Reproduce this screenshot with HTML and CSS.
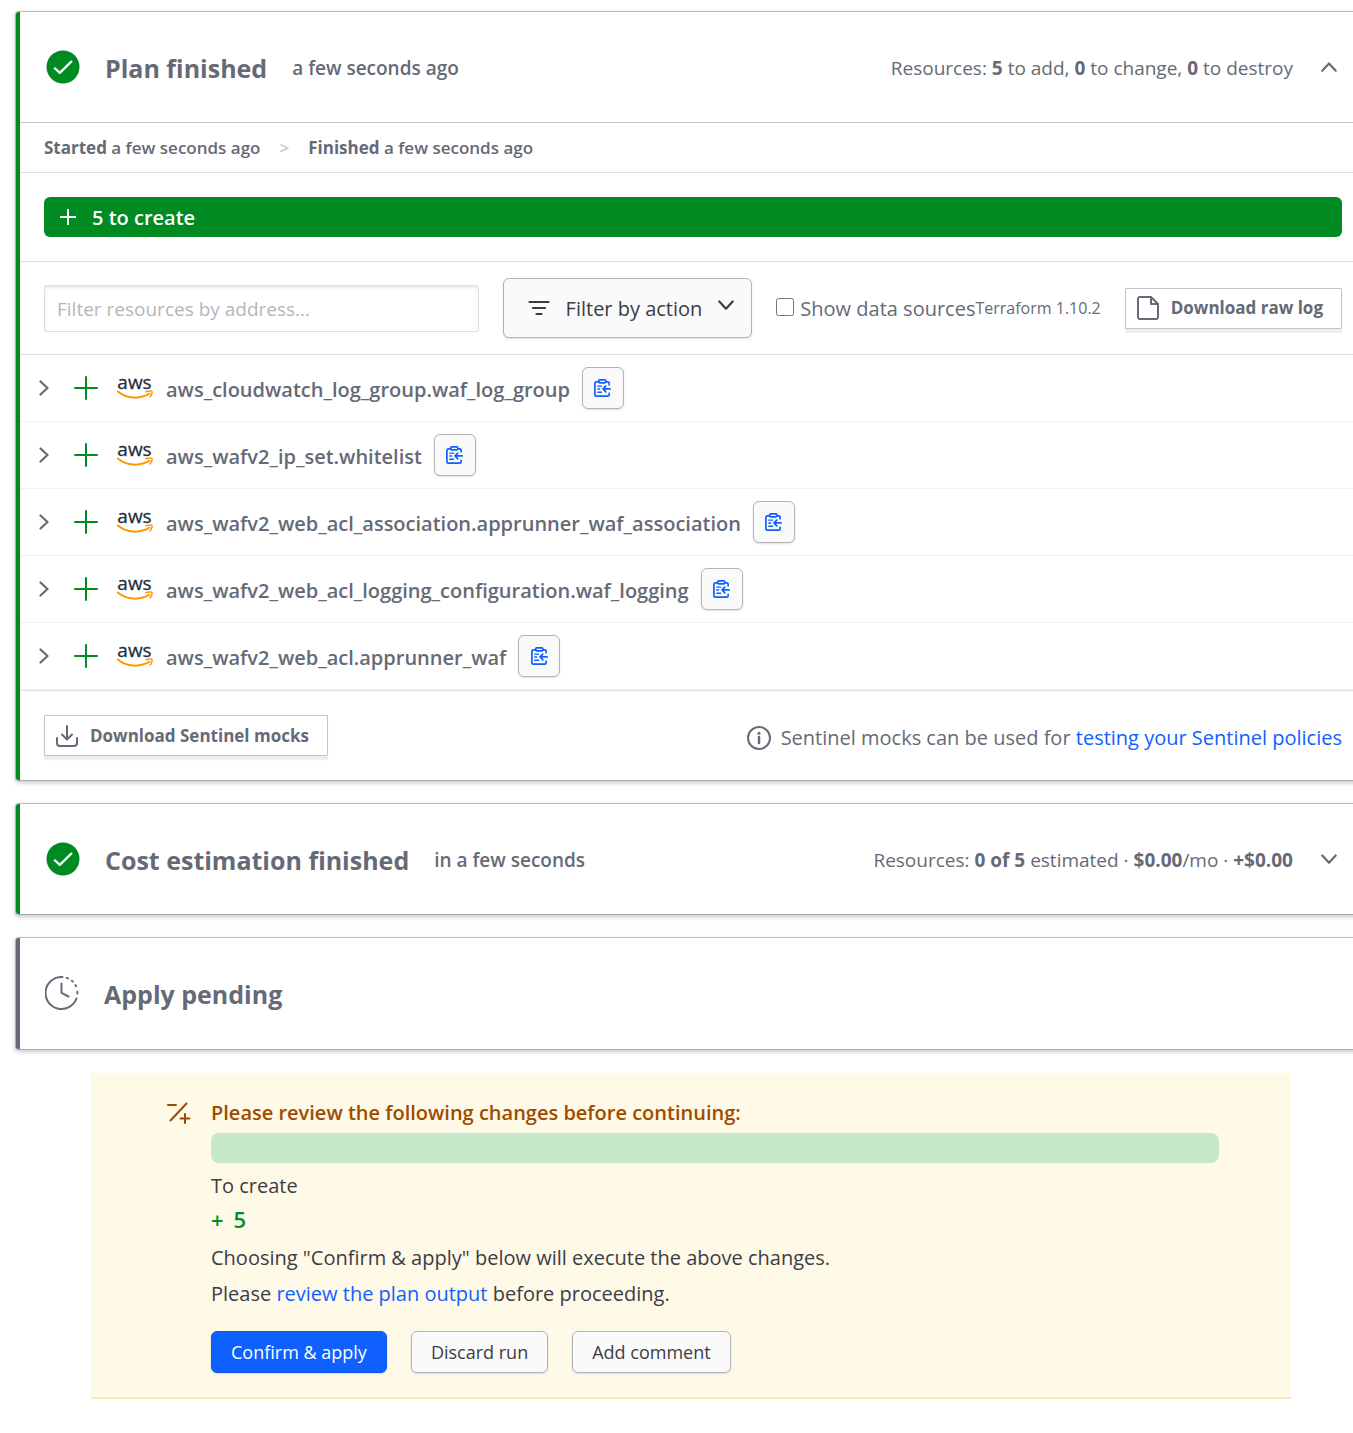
FILE: index.html
```html
<!DOCTYPE html>
<html lang="en">

<head>
  <meta charset="utf-8">
  <meta name="viewport" content="width=device-width, initial-scale=1.0">
  <title>Run details</title>
  <link rel="stylesheet" href="styles.css">
</head>

<body>
  <!-- shared icons -->
  <svg class="sprite" aria-hidden="true">
    <symbol id="icon-check" viewBox="0 0 34 34">
      <circle cx="17" cy="17" r="16.5" fill="#008a22" />
      <path d="M8.800 18.300l5 4.600L25.300 11.600" fill="none" stroke="#fff" stroke-width="2.200" stroke-linecap="round" stroke-linejoin="round" />
    </symbol>
    <symbol id="icon-chevron-right" viewBox="0 0 16 16">
      <path d="M4.500 1.500l7 6.500-7 6.500" fill="none" stroke="currentColor" stroke-width="2.200" stroke-linecap="round" stroke-linejoin="round" />
    </symbol>
    <symbol id="icon-chevron-down" viewBox="0 0 16 16">
      <path d="M1.300 4.500L8 11.700l6.700-7.200" fill="none" stroke="currentColor" stroke-width="2.200" stroke-linecap="round" stroke-linejoin="round" />
    </symbol>
    <symbol id="icon-chevron-up" viewBox="0 0 16 16">
      <path d="M1.300 11.700L8 4.500l6.700 7.200" fill="none" stroke="currentColor" stroke-width="2.200" stroke-linecap="round" stroke-linejoin="round" />
    </symbol>
    <symbol id="icon-plus" viewBox="0 0 24 24">
      <path d="M12 1v22M1 12h22" fill="none" stroke="currentColor" stroke-linecap="round" />
    </symbol>
    <symbol id="icon-aws" viewBox="0 0 36 26">
      <text x="17.500" y="14" text-anchor="middle" class="aws-text">aws</text>
      <path d="M.800 16.500C10 24 23 24.500 32.500 18.700" fill="none" stroke="#f90" stroke-width="2" stroke-linecap="round" />
      <path d="M29 16.800c3-1.200 5.800-1 6-.500.300.700 0 3.700-2 5.700" fill="none" stroke="#f90" stroke-width="1.500" stroke-linecap="round" />
    </symbol>
    <symbol id="icon-clipboard" viewBox="0 0 20 20">
      <g fill="none" stroke="#1060ff" stroke-width="1.800" stroke-linecap="round" stroke-linejoin="round">
        <path d="M6 3H3.500A1.500 1.500 0 0 0 2 4.500v12A1.500 1.500 0 0 0 3.500 18h12a1.500 1.500 0 0 0 1.500-1.500V15M13.500 3h2A1.500 1.500 0 0 1 17 4.500V6" />
        <rect x="6" y="1" width="7.500" height="3" rx="1" />
        <path d="M18 10.500h-7M13.500 7.500l-3 3 3 3" />
        <path d="M5 7.500h4M5 10.500h2M5 14h4" stroke-width="1.500" />
      </g>
    </symbol>
  </svg>

  <main class="run">
    <section class="card card-done">
      <header class="card-header">
        <svg class="status-icon"><use href="#icon-check" /></svg>
        <h2>Plan finished</h2>
        <span class="when">a few seconds ago</span>
        <span class="summary">Resources: <b>5</b> to add, <b>0</b> to change, <b>0</b> to destroy</span>
        <button type="button" class="toggle" aria-label="Collapse plan">
          <svg class="chevron"><use href="#icon-chevron-up" /></svg>
        </button>
      </header>

      <div class="timeline">
        <span><b>Started</b> a few seconds ago</span>
        <span class="arrow">&gt;</span>
        <span><b>Finished</b> a few seconds ago</span>
      </div>

      <div class="bar-wrap">
        <div class="create-bar">
          <svg class="bar-plus"><use href="#icon-plus" /></svg>
          <span>5 to create</span>
        </div>
      </div>

      <form class="filters">
        <input type="text" class="filter-input" placeholder="Filter resources by address..." aria-label="Filter resources by address">
        <button type="button" class="btn filter-btn">
          <svg class="filter-icon" viewBox="0 0 22 16">
            <path d="M1.500 2h19M5 8h12M8.500 14h5" fill="none" stroke="currentColor" stroke-width="2.200" stroke-linecap="round" />
          </svg>
          <span>Filter by action</span>
          <svg class="chevron"><use href="#icon-chevron-down" /></svg>
        </button>
        <div class="options">
          <input type="checkbox" id="dataSources">
          <label for="dataSources">Show data sources</label>
          <span class="version">Terraform 1.10.2</span>
        </div>
        <button type="button" class="btn-flat">
          <svg class="file-icon" viewBox="0 0 22 24">
            <path d="M3 1h11l7 7v13a2 2 0 0 1-2 2H3a2 2 0 0 1-2-2V3a2 2 0 0 1 2-2z" fill="none" stroke="currentColor" stroke-width="2" stroke-linejoin="round" />
            <path d="M14 1v7h7" fill="none" stroke="currentColor" stroke-width="2" stroke-linejoin="round" />
          </svg>
          <span>Download raw log</span>
        </button>
      </form>

      <ul class="resources">
        <li>
          <svg class="chevron"><use href="#icon-chevron-right" /></svg>
          <svg class="row-plus"><use href="#icon-plus" /></svg>
          <svg class="aws"><use href="#icon-aws" /></svg>
          <span class="address">aws_cloudwatch_log_group.waf_log_group</span>
          <button type="button" class="btn copy" aria-label="Copy address"><svg><use href="#icon-clipboard" /></svg></button>
        </li>
        <li>
          <svg class="chevron"><use href="#icon-chevron-right" /></svg>
          <svg class="row-plus"><use href="#icon-plus" /></svg>
          <svg class="aws"><use href="#icon-aws" /></svg>
          <span class="address">aws_wafv2_ip_set.whitelist</span>
          <button type="button" class="btn copy" aria-label="Copy address"><svg><use href="#icon-clipboard" /></svg></button>
        </li>
        <li>
          <svg class="chevron"><use href="#icon-chevron-right" /></svg>
          <svg class="row-plus"><use href="#icon-plus" /></svg>
          <svg class="aws"><use href="#icon-aws" /></svg>
          <span class="address">aws_wafv2_web_acl_association.apprunner_waf_association</span>
          <button type="button" class="btn copy" aria-label="Copy address"><svg><use href="#icon-clipboard" /></svg></button>
        </li>
        <li>
          <svg class="chevron"><use href="#icon-chevron-right" /></svg>
          <svg class="row-plus"><use href="#icon-plus" /></svg>
          <svg class="aws"><use href="#icon-aws" /></svg>
          <span class="address">aws_wafv2_web_acl_logging_configuration.waf_logging</span>
          <button type="button" class="btn copy" aria-label="Copy address"><svg><use href="#icon-clipboard" /></svg></button>
        </li>
        <li>
          <svg class="chevron"><use href="#icon-chevron-right" /></svg>
          <svg class="row-plus"><use href="#icon-plus" /></svg>
          <svg class="aws"><use href="#icon-aws" /></svg>
          <span class="address">aws_wafv2_web_acl.apprunner_waf</span>
          <button type="button" class="btn copy" aria-label="Copy address"><svg><use href="#icon-clipboard" /></svg></button>
        </li>
      </ul>

      <footer class="card-footer">
        <button type="button" class="btn-flat">
          <svg class="download-icon" viewBox="0 0 22 22">
            <path d="M1 13v5a3 3 0 0 0 3 3h14a3 3 0 0 0 3-3v-5M11 1v13M6 9.500l5 5 5-5" fill="none" stroke="currentColor" stroke-width="2" stroke-linecap="round" stroke-linejoin="round" />
          </svg>
          <span>Download Sentinel mocks</span>
        </button>
        <p class="hint">
          <svg class="info-icon" viewBox="0 0 24 24">
            <circle cx="12" cy="12" r="11" fill="none" stroke="currentColor" stroke-width="2" />
            <path d="M12 11v6" stroke="currentColor" stroke-width="2.500" stroke-linecap="round" />
            <circle cx="12" cy="7.200" r="1.500" fill="currentColor" />
          </svg>
          <span>Sentinel mocks can be used for <a href="#">testing your Sentinel policies</a></span>
        </p>
      </footer>
    </section>

    <section class="card card-done">
      <header class="card-header">
        <svg class="status-icon"><use href="#icon-check" /></svg>
        <h2>Cost estimation finished</h2>
        <span class="when">in a few seconds</span>
        <span class="summary">Resources: <b>0 of 5</b> estimated · <b>$0.00</b>/mo · <b>+$0.00</b></span>
        <button type="button" class="toggle" aria-label="Expand cost estimation">
          <svg class="chevron"><use href="#icon-chevron-down" /></svg>
        </button>
      </header>
    </section>

    <section class="card card-pending">
      <header class="card-header">
        <svg class="status-icon" viewBox="0 0 34 34">
          <g fill="none" stroke="currentColor" stroke-width="2" stroke-linecap="round">
            <path d="M17.500 1A16 16 0 1 0 31.500 22.500" />
            <path d="M21.800 1.900l1.200.500M26.800 4.700l1 .900M30.400 9.100l.600 1.200M32.300 15.800v1.600" />
            <path d="M16.500 7.500V17l7 3.500" />
          </g>
        </svg>
        <h2>Apply pending</h2>
      </header>
    </section>

    <section class="review">
      <svg class="changes-icon" viewBox="0 0 24 22">
        <path d="M1 3h8M19.500 1.500l-16 17M18 12v9M13.500 16.500h9" fill="none" stroke="currentColor" stroke-width="2" stroke-linecap="round" />
      </svg>
      <div class="review-body">
        <h3>Please review the following changes before continuing:</h3>
        <div class="review-bar"></div>
        <p>To create</p>
        <p class="create-count"><span>+</span><span>5</span></p>
        <p>Choosing "Confirm &amp; apply" below will execute the above changes.</p>
        <p>Please <a href="#">review the plan output</a> before proceeding.</p>
        <div class="actions">
          <button type="button" class="btn btn-primary">Confirm &amp; apply</button>
          <button type="button" class="btn">Discard run</button>
          <button type="button" class="btn">Add comment</button>
        </div>
      </div>
    </section>
  </main>
</body>

</html>
```

FILE: styles.css
```css
* {
  box-sizing: border-box;
}

body {
  margin: 0;
  font-family: "Segoe UI", "Open Sans", "Noto Sans", sans-serif;
  font-size: 20px;
  line-height: 24px;
  color: #656a76;
  background-color: #fff;
  overflow-x: hidden;
}

h2, h3, p, ul {
  margin: 0;
  padding: 0;
}

a {
  color: #1060ff;
  text-decoration: none;
}

b {
  font-weight: 700;
}

button {
  font-family: inherit;
  font-size: inherit;
  line-height: inherit;
  color: inherit;
  cursor: pointer;
}

svg {
  flex: none;
}

.sprite {
  display: none;
}

/* the panels run past the right side of the window */
.run {
  margin: 12px -13px 24px 16px;
  display: flex;
  flex-direction: column;
  gap: 24px;
}

.card {
  border-left: 4px solid #656a76;
  border-radius: 3px;
  background-color: #fff;
  box-shadow: 0 0 0 1px rgba(101, 106, 118, 0.4), 0 2px 4px 1px rgba(101, 106, 118, 0.35);
}

.card-done {
  border-left-color: #008a22;
}

.card-header {
  display: flex;
  align-items: center;
  height: 110px;
  padding: 0 29px 0 26px;
}

.card-pending .card-header {
  height: 111px;
  padding: 0 29px 1px 25px;
}

.status-icon {
  width: 34px;
  height: 34px;
  margin-right: 25px;
}

.card-header h2 {
  padding-top: 2px;
  font-size: 25px;
  line-height: 32px;
  font-weight: 700;
}

.when,
.summary {
  padding-top: 2px;
  font-size: 19px;
}

.when {
  margin-left: 25px;
  font-weight: 600;
}

.summary {
  margin-left: auto;
}

.toggle {
  margin-left: 28px;
  padding: 0;
  border: none;
  background: none;
}

.chevron {
  display: block;
  width: 16px;
  height: 16px;
}

.timeline {
  display: flex;
  gap: 19px;
  padding: 13px 24px 12px;
  border-top: 1px solid #c2c5cb;
  font-size: 17px;
  font-weight: 600;
}

.arrow {
  color: #c2c5cb;
}

.bar-wrap {
  padding: 24px;
  border-top: 1px solid #dedfe3;
}

.create-bar {
  display: flex;
  align-items: center;
  gap: 16px;
  height: 40px;
  padding: 0 16px;
  border-radius: 6px;
  background-color: #008a22;
  color: #fff;
  font-weight: 600;
}

.create-bar span {
  padding-top: 2px;
}

.bar-plus {
  width: 16px;
  height: 16px;
  stroke-width: 3px;
}

.filters {
  display: flex;
  align-items: center;
  gap: 24px;
  padding: 16px 24px;
  border-top: 1px solid #dedfe3;
}

.filter-input {
  flex: 1;
  min-width: 0;
  height: 47px;
  padding: 2px 12px 0;
  border: 1px solid #dedfe3;
  border-radius: 2px;
  box-shadow: inset 0 2px 3px rgba(101, 106, 118, 0.15);
  font-family: inherit;
  font-size: 19px;
  color: #3b3d45;
}

.filter-input::placeholder {
  color: #b4b6bb;
}

.btn {
  height: 42px;
  padding: 0 19px;
  border: 1px solid #b2b3b8;
  border-radius: 6px;
  background-color: #fafafa;
  box-shadow: 0 1px 2px rgba(101, 106, 118, 0.2);
  color: #3b3d45;
  font-size: 18px;
}

.filter-btn {
  display: flex;
  align-items: center;
  gap: 16px;
  height: 60px;
  padding: 0 17px 0 24px;
  font-size: 20px;
}

.filter-btn span {
  padding-top: 2px;
}

.filter-btn .chevron {
  margin-bottom: 6px;
}

.filter-icon {
  width: 22px;
  height: 16px;
}

.options {
  display: flex;
  align-items: center;
}

.options input {
  width: 18px;
  height: 18px;
  margin: 0 6px 2px 0;
}

.options label {
  padding-top: 2px;
}

.version {
  font-size: 16px;
}

.btn-flat {
  display: flex;
  align-items: center;
  gap: 12px;
  height: 41px;
  padding: 0 18px 0 11px;
  border: 1px solid #c2c5cb;
  border-radius: 1px;
  background-color: #fff;
  box-shadow: 0 4px 1px rgba(101, 106, 118, 0.12);
  font-size: 17px;
  font-weight: 700;
}

.file-icon {
  width: 22px;
  height: 24px;
}

.resources {
  list-style: none;
  border-top: 1px solid #dedfe3;
}

.resources li {
  display: flex;
  align-items: center;
  height: 67px;
  padding: 0 16px;
  border-bottom: 1px solid #f1f2f3;
}

.row-plus {
  width: 24px;
  height: 24px;
  margin: 0 19px 0 22px;
  color: #008a22;
  stroke-width: 2px;
}

.aws {
  width: 36px;
  height: 26px;
}

.aws-text {
  font-size: 19px;
  font-weight: 400;
  fill: #252f3e;
  stroke: #252f3e;
  stroke-width: 0.3px;
}

.address {
  margin: 0 12px 0 13px;
  padding-top: 3px;
  font-weight: 600;
}

.copy {
  display: flex;
  align-items: center;
  justify-content: center;
  width: 42px;
  padding: 0;
}

.copy svg {
  width: 19px;
  height: 19px;
}

.card-footer {
  display: flex;
  align-items: center;
  justify-content: space-between;
  padding: 24px;
  border-top: 1px solid #dedfe3;
}

.download-icon {
  width: 22px;
  height: 22px;
}

.hint {
  display: flex;
  align-items: center;
  gap: 10px;
  padding-top: 4px;
}

.info-icon {
  width: 24px;
  height: 24px;
}

.review {
  display: flex;
  width: 100%;
  max-width: 1200px;
  margin: 0 auto;
  padding: 24px 72px 24px 76px;
  background-color: #fff9e8;
  border-bottom: 2px solid #faeac0;
  color: #3b3d45;
}

.changes-icon {
  width: 24px;
  height: 22px;
  margin: 5px 20px 0 0;
  color: #9e4b00;
}

.review-body {
  flex: 1;
}

.review-body p {
  line-height: 36px;
}

.review-body h3 {
  font-size: 20px;
  line-height: 32px;
  font-weight: 600;
  color: #9e4b00;
}

.review-bar {
  height: 30px;
  margin: 4px 0 5px;
  border-radius: 8px;
  background-color: #c6e9c9;
}

.review-body .create-count {
  display: flex;
  gap: 10px;
  padding-bottom: 6px;
  font-size: 22px;
  line-height: 30px;
  font-weight: 600;
  color: #008a22;
}

.actions {
  display: flex;
  gap: 24px;
  margin-top: 19px;
}

.btn-primary {
  border-color: #0c56e9;
  background-color: #1060ff;
  color: #fff;
}
```
